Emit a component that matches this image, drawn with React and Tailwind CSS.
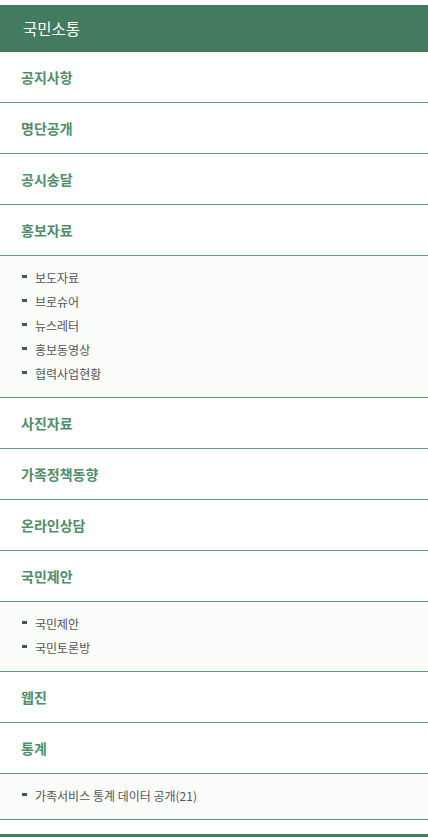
const groups = [
  { title: "공지사항" },
  { title: "명단공개" },
  { title: "공시송달" },
  { title: "홍보자료", subs: ["보도자료", "브로슈어", "뉴스레터", "홍보동영상", "협력사업현황"] },
  { title: "사진자료" },
  { title: "가족정책동향" },
  { title: "온라인상담" },
  { title: "국민제안", subs: ["국민제안", "국민토론방"] },
  { title: "웹진" },
  { title: "통계", subs: ["가족서비스 통계 데이터 공개(21)"] },
];

const font = { fontFamily: '"Noto Sans CJK KR", "Noto Sans", sans-serif' };

export default function App() {
  return (
    <div className="w-[428px] h-[837px] bg-white overflow-hidden flex flex-col" style={font}>
      <div className="mt-[5px] h-[47px] bg-[#447a5e] flex items-center pl-[23px]">
        <h1 className="text-white text-[15.5px] leading-none">국민소통</h1>
      </div>

      {groups.map((g) => (
        <div key={g.title}>
          <div className="h-[51px] border-b border-[#5b9a78] flex items-center pl-[21px]">
            <span className="text-[#4f8e6b] text-[14px] font-semibold leading-none">{g.title}</span>
          </div>
          {g.subs && (
            <ul className="bg-[#fafcfa] border-b border-[#5b9a78] pt-[10px] pb-[11px]">
              {g.subs.map((s) => (
                <li key={s} className="h-[24px] flex items-center pl-[22px]">
                  <span className="w-[5px] h-[3px] bg-[#3d5a4a] mr-[8px] -mt-[3px]"></span>
                  <span className="text-[12px] text-[#555]">{s}</span>
                </li>
              ))}
            </ul>
          )}
        </div>
      ))}

      <div className="mt-[14px] h-[3px] bg-[#447a5e]"></div>
    </div>
  );
}
